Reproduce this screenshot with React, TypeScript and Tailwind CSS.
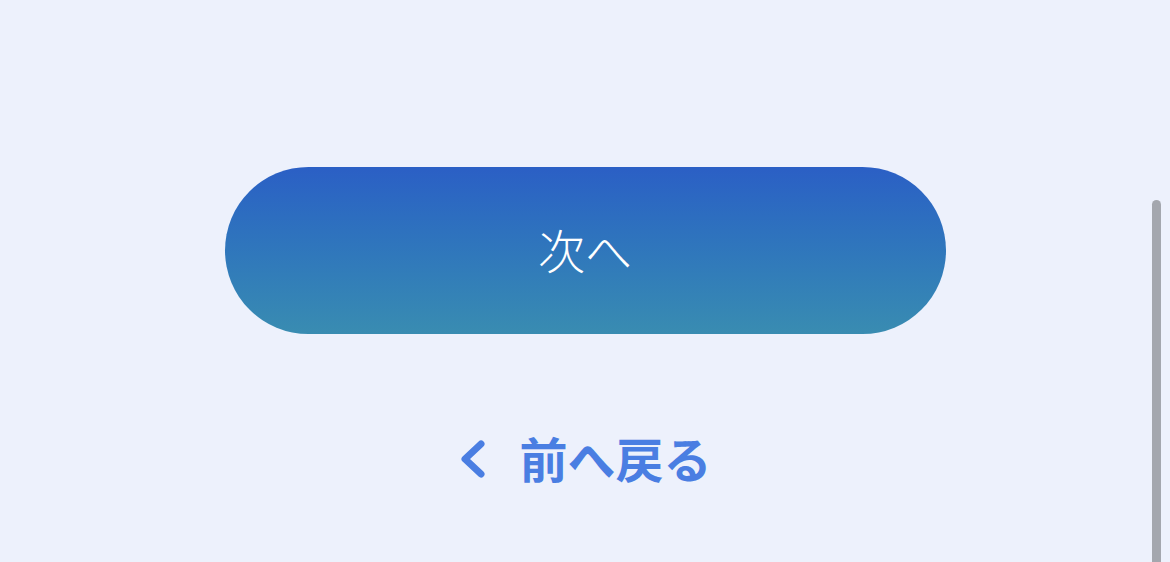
const jp = '[font-family:"Noto_Sans_CJK_JP","Noto_Sans",sans-serif]';

export default function App() {
    return (
        <main
            className={`relative flex h-[562px] w-full flex-col items-center overflow-hidden bg-[#edf1fc] ${jp}`}
        >
            <button
                type="button"
                className="mt-[167px] flex h-[167px] w-[721px] items-center justify-center rounded-full bg-gradient-to-b from-[#2b5fc5] to-[#398cb1] pb-[4px] text-[47px] font-light leading-none text-white"
            >
                次へ
            </button>

            <a
                href="#"
                className="mt-[99px] flex items-center gap-[31px] text-[48px] font-bold leading-none text-[#4a7ee2]"
            >
                <svg
                    viewBox="0 0 30 40"
                    className="mt-[4px] h-[40px] w-[30px]"
                    fill="none"
                    stroke="currentColor"
                    strokeWidth="7"
                    strokeLinecap="round"
                    strokeLinejoin="round"
                    aria-hidden
                >
                    <path d="M23 5 L7 20 L23 35" />
                </svg>
                <span>前へ戻る</span>
            </a>

            <div className="absolute top-[200px] right-[9px] h-[400px] w-[9px] rounded-full bg-[#a4a7ae]" />
        </main>
    );
}
